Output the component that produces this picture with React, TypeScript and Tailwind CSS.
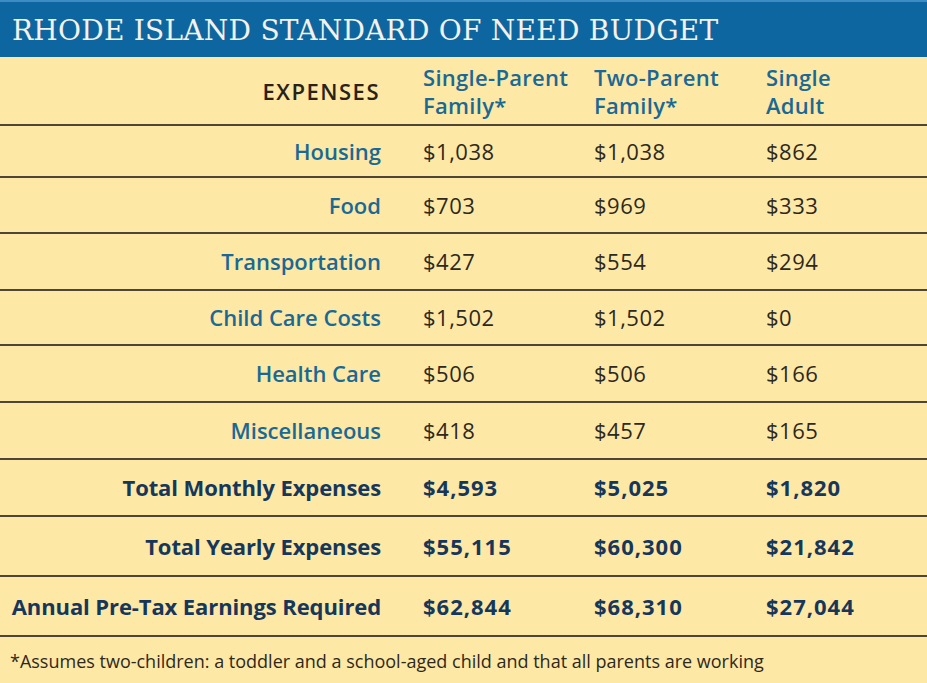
const rows = [
  { label: 'Housing', values: ['$1,038', '$1,038', '$862'], h: 'h-[52px]' },
  { label: 'Food', values: ['$703', '$969', '$333'], h: 'h-[56px]' },
  { label: 'Transportation', values: ['$427', '$554', '$294'], h: 'h-[57px]' },
  { label: 'Child Care Costs', values: ['$1,502', '$1,502', '$0'], h: 'h-[55px]' },
  { label: 'Health Care', values: ['$506', '$506', '$166'], h: 'h-[57px]' },
  { label: 'Miscellaneous', values: ['$418', '$457', '$165'], h: 'h-[57px]' },
];

const totals = [
  { label: 'Total Monthly Expenses', values: ['$4,593', '$5,025', '$1,820'], h: 'h-[57px]' },
  { label: 'Total Yearly Expenses', values: ['$55,115', '$60,300', '$21,842'], h: 'h-[60px]' },
  { label: 'Annual Pre-Tax Earnings Required', values: ['$62,844', '$68,310', '$27,044'], h: 'h-[60px]' },
];

export default function App() {
  return (
    <div className="flex h-[683px] w-[927px] flex-col overflow-hidden bg-[#fde8a6] font-['Open_Sans','Liberation_Sans',sans-serif]">
      <div className="flex h-[57px] shrink-0 items-center border-t-2 border-[#3d8cc4] bg-[#0e66a0] pl-[12px] pt-[2px]">
        <h1 className="font-['DejaVu_Serif',serif] text-[28px] font-light leading-none tracking-[0.25px] text-[#f4f1ea]">
          RHODE ISLAND STANDARD OF NEED BUDGET
        </h1>
      </div>

      <div className="flex h-[69px] shrink-0 items-center border-b-2 border-[#4d4636] text-[22px] leading-[28px] font-semibold">
        <div className="w-[381px] pr-[1px] text-right tracking-[1.5px] text-[#2a2218]">EXPENSES</div>
        <div className="w-[213px] pl-[42px] tracking-[0.3px] text-[#1a6994]">
          Single-Parent
          <br />
          Family*
        </div>
        <div className="w-[172px] tracking-[0.3px] text-[#1a6994]">
          Two-Parent
          <br />
          Family*
        </div>
        <div className="tracking-[0.3px] text-[#1a6994]">
          Single
          <br />
          Adult
        </div>
      </div>

      {rows.map((row) => (
        <div key={row.label} className={`flex ${row.h} shrink-0 items-center border-b-2 border-[#4d4636] text-[22px]`}>
          <div className="w-[381px] text-right font-semibold text-[#1a6994]">{row.label}</div>
          <div className="w-[213px] pl-[42px] tracking-[0.5px] text-[#2d2820]">{row.values[0]}</div>
          <div className="w-[172px] tracking-[0.5px] text-[#2d2820]">{row.values[1]}</div>
          <div className="tracking-[0.5px] text-[#2d2820]">{row.values[2]}</div>
        </div>
      ))}

      {totals.map((row) => (
        <div
          key={row.label}
          className={`flex ${row.h} shrink-0 items-center border-b-2 border-[#4d4636] text-[22px] font-bold text-[#17375a]`}
        >
          <div className="w-[381px] text-right tracking-[-0.1px]">{row.label}</div>
          <div className="w-[213px] pl-[42px] tracking-[1px]">{row.values[0]}</div>
          <div className="w-[172px] tracking-[1px]">{row.values[1]}</div>
          <div className="tracking-[1px]">{row.values[2]}</div>
        </div>
      ))}

      <div className="flex flex-1 items-center pl-[10px] pt-[2px] text-[18px] text-[#2d2820]">
        *Assumes two-children: a toddler and a school-aged child and that all parents are working
      </div>
    </div>
  );
}
